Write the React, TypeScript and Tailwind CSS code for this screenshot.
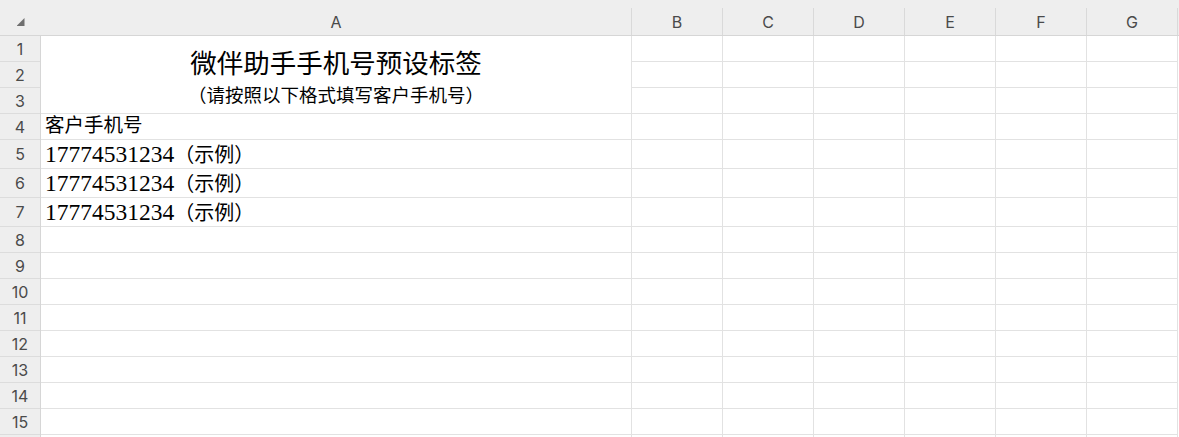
import React from 'react';

const cols = ['B', 'C', 'D', 'E', 'F', 'G'];

// row heights incl. bottom border, rows 1..16
const rowHeights = [26, 26, 26, 26, 29, 29, 29, 26, 26, 26, 26, 26, 26, 26, 26, 26];

const serif = { fontFamily: '"Liberation Serif", "Noto Sans CJK SC", serif' };
const cjk = { fontFamily: '"Noto Sans CJK SC", sans-serif' };

function Sample() {
  return (
    <span className="leading-none">
      <span className="text-[23.5px]">17774531234</span>
      <span className="text-[20px]" style={cjk}>（示例）</span>
    </span>
  );
}

function cellA(row: number) {
  if (row === 4) {
    return (
      <div className="flex h-full items-end pb-[1px] pl-[4px] text-[19.5px] leading-[24px] text-black" style={serif}>
        客户手机号
      </div>
    );
  }
  if (row >= 5 && row <= 7) {
    return (
      <div className="flex h-full items-end pb-[2px] pl-[4px] text-black" style={serif}>
        <Sample />
      </div>
    );
  }
  return null;
}

export default function App() {
  return (
    <div
      className="relative h-[437px] w-[1179px] overflow-hidden bg-white"
      style={{ fontFamily: 'Inter, "Noto Sans", sans-serif' }}
    >
      {/* column header */}
      <div className="flex h-[36px] border-b border-[#d6d6d6] bg-[#eeeeee]">
        <div className="flex w-[41px] shrink-0 items-end justify-center pb-[9px]">
          <div
            className="h-[8px] w-[8px] bg-[#6f6f6f]"
            style={{ clipPath: 'polygon(100% 0, 100% 100%, 0 100%)' }}
          />
        </div>
        <div className="flex w-[591px] shrink-0 flex-col">
          <div className="h-[8px]" />
          <div className="flex flex-1 items-center justify-center border-r border-[#d9d9d9] text-[16px] text-[#4a4a4a]">
            A
          </div>
        </div>
        {cols.map((c) => (
          <div key={c} className="flex w-[91px] shrink-0 flex-col">
            <div className="h-[8px]" />
            <div className="flex flex-1 items-center justify-center border-r border-[#d9d9d9] text-[16px] text-[#4a4a4a]">
              {c}
            </div>
          </div>
        ))}
      </div>

      {/* body */}
      <div className="flex">
        {/* row header */}
        <div className="flex w-[41px] shrink-0 flex-col border-r border-[#d6d6d6] bg-[#eeeeee]">
          {rowHeights.map((h, i) => (
            <div
              key={i}
              className="flex shrink-0 items-center justify-center border-b border-[#dcdcdc] text-[16px] text-[#4a4a4a]"
              style={{ height: h }}
            >
              {i < 15 ? i + 1 : null}
            </div>
          ))}
        </div>

        {/* column A */}
        <div className="flex w-[591px] shrink-0 flex-col border-r border-[#e2e2e2]">
          <div
            className="flex h-[78px] shrink-0 flex-col items-center justify-end border-b border-[#e2e2e2] pb-[8px] text-black"
            style={cjk}
          >
            <div className="text-[26.5px] leading-[29px]">微伴助手手机号预设标签</div>
            <div className="mt-[7px] text-[18.5px] leading-[22px]">（请按照以下格式填写客户手机号）</div>
          </div>
          {rowHeights.slice(3).map((h, i) => (
            <div key={i} className="shrink-0 border-b border-[#e2e2e2]" style={{ height: h }}>
              {cellA(i + 4)}
            </div>
          ))}
        </div>

        {/* columns B-G */}
        {cols.map((c) => (
          <div key={c} className="flex w-[91px] shrink-0 flex-col border-r border-[#e2e2e2]">
            {rowHeights.map((h, i) => (
              <div key={i} className="shrink-0 border-b border-[#e2e2e2]" style={{ height: h }} />
            ))}
          </div>
        ))}
      </div>
    </div>
  );
}
